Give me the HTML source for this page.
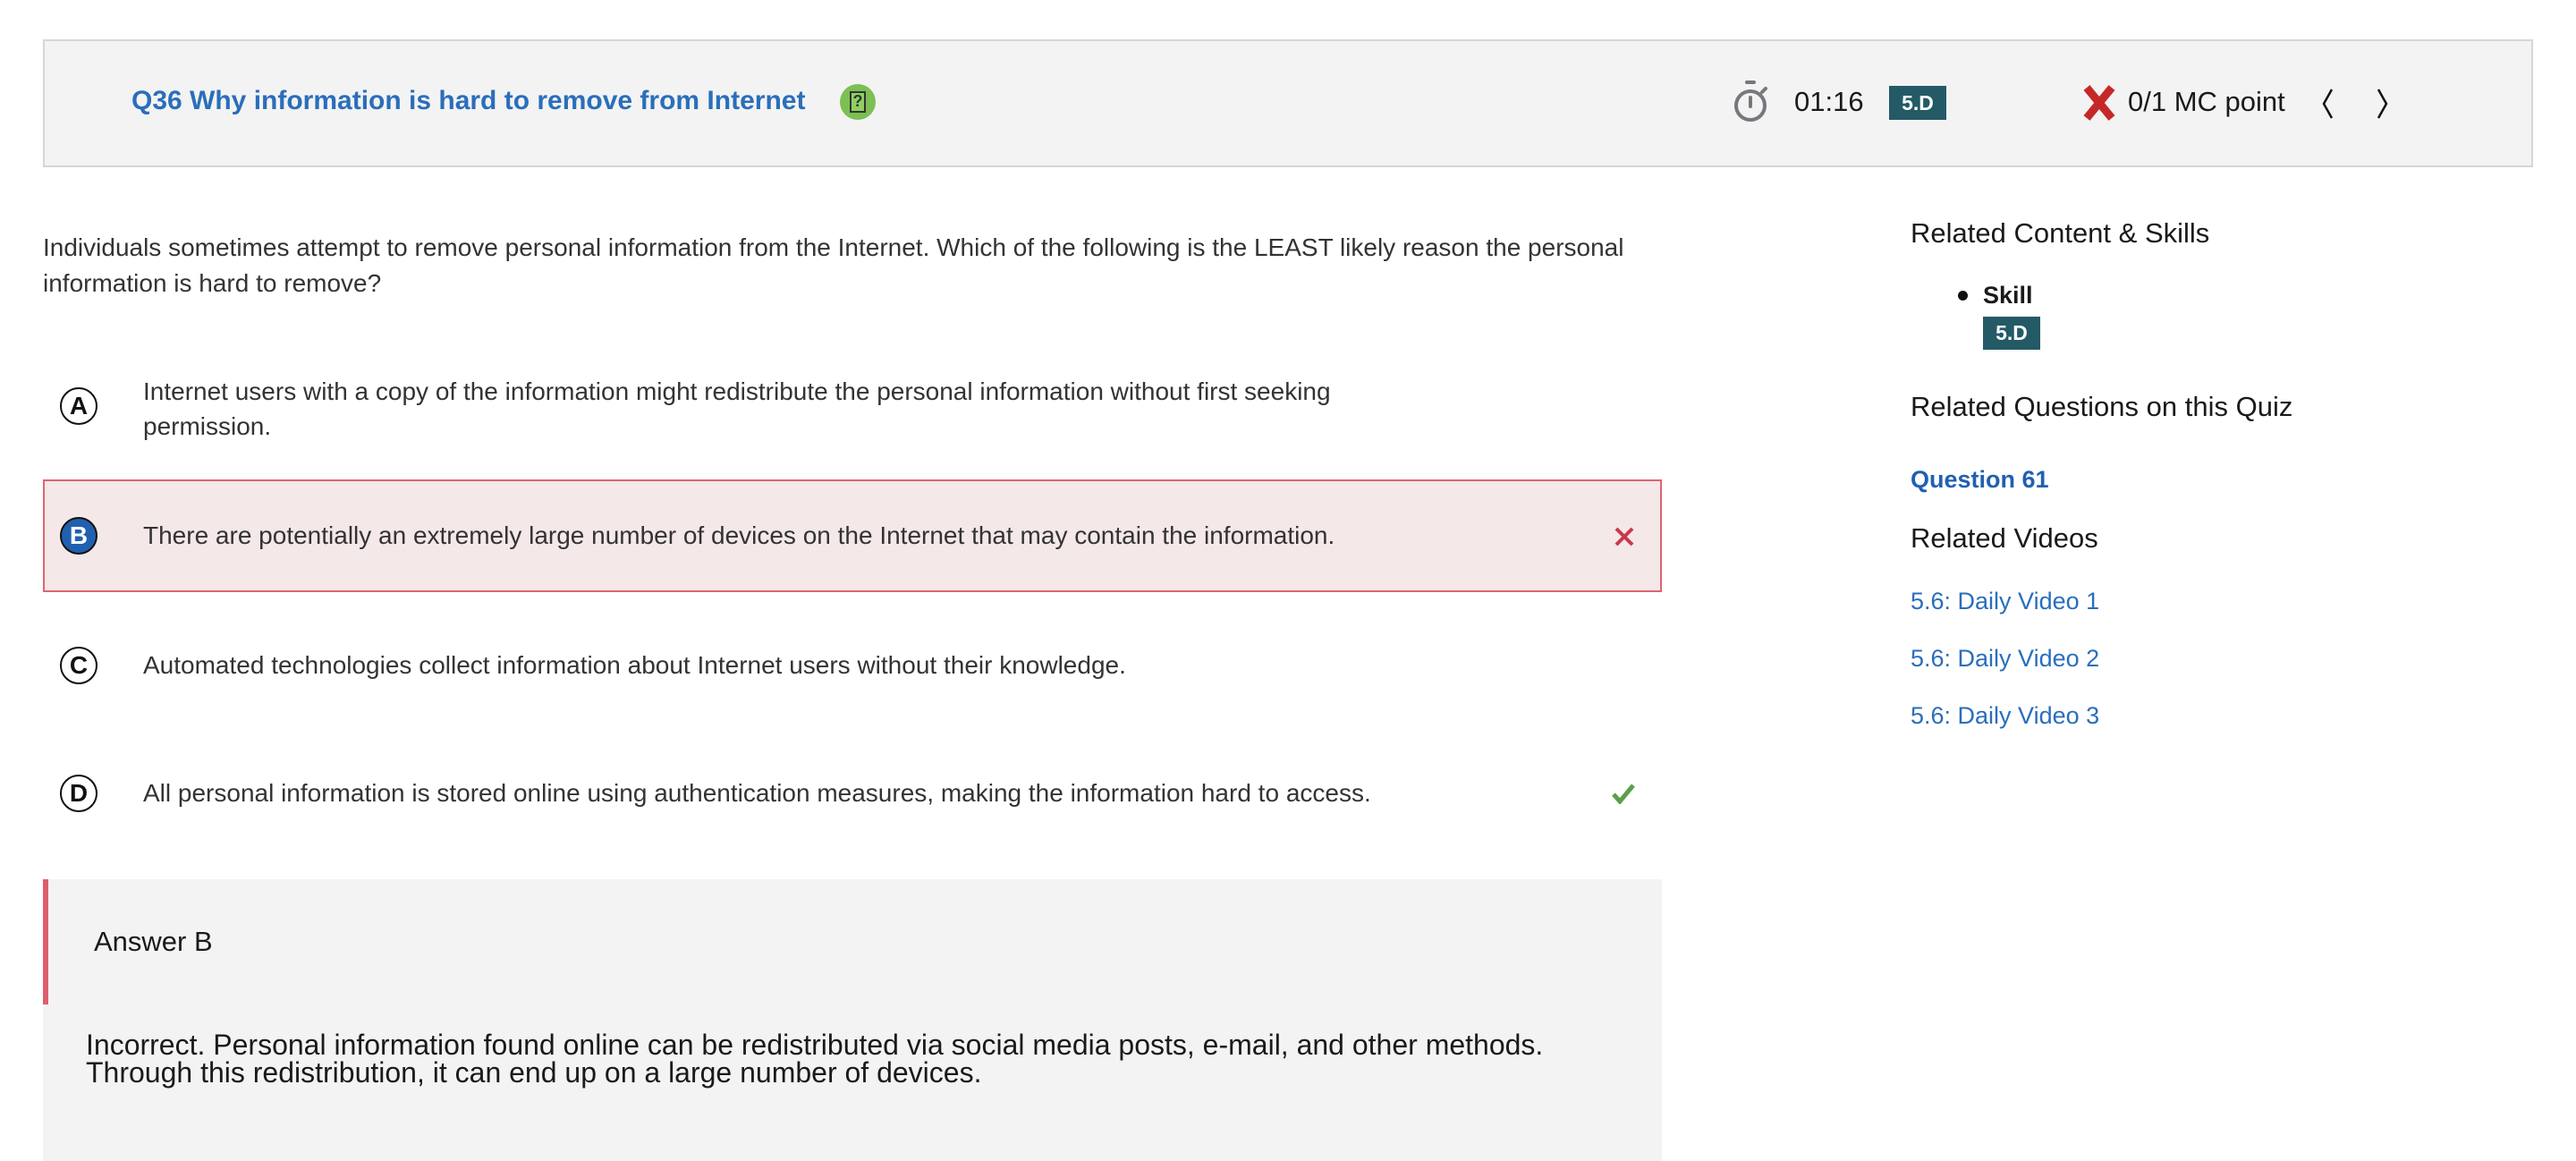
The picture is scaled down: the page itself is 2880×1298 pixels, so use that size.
<!DOCTYPE html>
<html><head><meta charset="utf-8"><style>
*{margin:0;padding:0;box-sizing:border-box}
body{width:2880px;height:1298px;background:#fff;font-family:"Liberation Sans",sans-serif;color:#222;position:relative;overflow:hidden}
.a{position:absolute;white-space:nowrap}
.hdr{position:absolute;left:48px;top:44px;width:2784px;height:143px;background:#f3f3f3;border:2px solid #d5d5da}
.badge{position:absolute;background:#245a66;color:#fff;font-weight:bold;font-size:23px;text-align:center}
.circ{position:absolute;width:42px;height:42px;border:2.5px solid #111;border-radius:50%;font-weight:bold;font-size:28px;text-align:center;line-height:37px;color:#111}
.opt{font-size:28px;color:#333}
.link{color:#2a6ebb;font-size:27px}
.h{font-size:31px;color:#1a1a1a}
</style></head><body>
<div class="hdr"></div>
<div class="a" style="left:147px;top:96px;font-size:30px;font-weight:bold;color:#2a6ebb">Q36 Why information is hard to remove from Internet</div>
<div class="a" style="left:939px;top:94px;width:40px;height:40px;border-radius:50%;background:#7cbf52"></div>
<div class="a" style="left:950px;top:102px;width:18px;height:24px;border:2px solid #333;background:#8fd060;font-size:18px;font-weight:bold;line-height:19px;text-align:center;color:#333">?</div>
<svg class="a" style="left:1936px;top:88px" width="44" height="52" viewBox="0 0 44 52"><rect x="15" y="2" width="12" height="4" rx="2" fill="#77777d"/><circle cx="21" cy="30" r="16" fill="none" stroke="#77777d" stroke-width="4"/><line x1="21" y1="21" x2="21" y2="31" stroke="#77777d" stroke-width="4" stroke-linecap="round"/><line x1="34" y1="15" x2="38" y2="11" stroke="#77777d" stroke-width="4" stroke-linecap="round"/></svg>
<div class="a" style="left:2006px;top:96px;font-size:31px;color:#1a1a1a">01:16</div>
<div class="badge" style="left:2112px;top:96px;width:64px;height:38px;line-height:38px">5.D</div>
<svg class="a" style="left:2327px;top:94px" width="40" height="42" viewBox="0 0 40 42"><path d="M6 4 L34 38 M34 4 L6 38" stroke="#c62828" stroke-width="9"/></svg>
<div class="a" style="left:2379px;top:96px;font-size:31px;color:#1a1a1a">0/1 MC point</div>
<svg class="a" style="left:2590px;top:96px" width="100" height="40" viewBox="0 0 100 40"><path d="M17 4 L8 20 L17 36" fill="none" stroke="#111" stroke-width="2.5"/><path d="M69 4 L78 20 L69 36" fill="none" stroke="#111" stroke-width="2.5"/></svg>

<div class="a opt" style="left:48px;top:257px;line-height:40px;color:#333">Individuals sometimes attempt to remove personal information from the Internet. Which of the following is the LEAST likely reason the personal<br>information is hard to remove?</div>

<div class="circ" style="left:67px;top:433px">A</div>
<div class="a opt" style="left:160px;top:418px;line-height:39px">Internet users with a copy of the information might redistribute the personal information without first seeking<br>permission.</div>

<div class="a" style="left:48px;top:536px;width:1810px;height:126px;background:#f4e8e8;border:2px solid #df6470"></div>
<div class="circ" style="left:67px;top:578px;background:#2160b0;color:#fff">B</div>
<div class="a opt" style="left:160px;top:583px">There are potentially an extremely large number of devices on the Internet that may contain the information.</div>
<svg class="a" style="left:1804px;top:588px" width="24" height="24" viewBox="0 0 24 24"><path d="M3 3 L21 21 M21 3 L3 21" stroke="#c8394a" stroke-width="4"/></svg>

<div class="circ" style="left:67px;top:723px">C</div>
<div class="a opt" style="left:160px;top:728px">Automated technologies collect information about Internet users without their knowledge.</div>

<div class="circ" style="left:67px;top:866px">D</div>
<div class="a opt" style="left:160px;top:871px">All personal information is stored online using authentication measures, making the information hard to access.</div>
<svg class="a" style="left:1802px;top:875px" width="26" height="24" viewBox="0 0 26 24"><path d="M2 13 L9 21 L24 3" fill="none" stroke="#5aa04a" stroke-width="5"/></svg>

<div class="a" style="left:48px;top:983px;width:1810px;height:315px;background:#f3f3f3"></div>
<div class="a" style="left:48px;top:983px;width:6px;height:140px;background:#dd5f6c"></div>
<div class="a" style="left:105px;top:1035px;font-size:31px;color:#1a1a1a">Answer B</div>
<div class="a" style="left:96px;top:1153px;font-size:32px;line-height:31px;color:#1a1a1a">Incorrect. Personal information found online can be redistributed via social media posts, e-mail, and other methods.<br>Through this redistribution, it can end up on a large number of devices.</div>

<div class="a h" style="left:2136px;top:243px">Related Content &amp; Skills</div>
<div class="a" style="left:2189px;top:325px;width:11px;height:11px;border-radius:50%;background:#111"></div>
<div class="a" style="left:2217px;top:315px;font-size:27px;font-weight:bold;color:#1a1a1a">Skill</div>
<div class="badge" style="left:2217px;top:354px;width:64px;height:37px;line-height:37px">5.D</div>
<div class="a h" style="left:2136px;top:437px">Related Questions on this Quiz</div>
<div class="a" style="left:2136px;top:521px;font-size:27px;font-weight:bold;color:#2160b0">Question 61</div>
<div class="a h" style="left:2136px;top:584px">Related Videos</div>
<div class="a link" style="left:2136px;top:657px">5.6: Daily Video 1</div>
<div class="a link" style="left:2136px;top:721px">5.6: Daily Video 2</div>
<div class="a link" style="left:2136px;top:785px">5.6: Daily Video 3</div>
</body></html>
